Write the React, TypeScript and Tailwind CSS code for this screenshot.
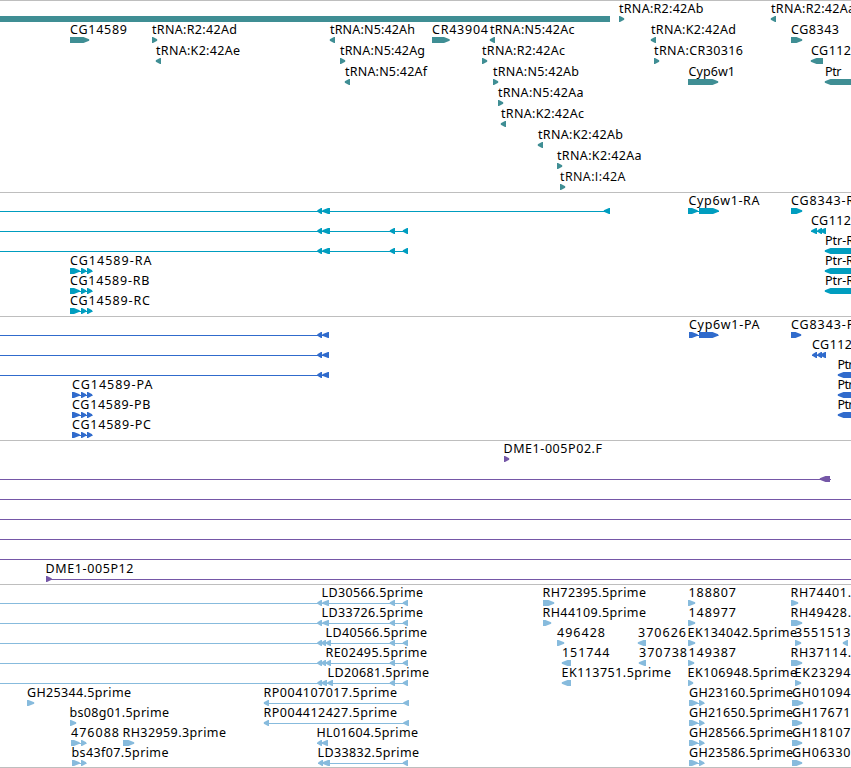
type Span = [number, number];

interface Feature {
  row: number;
  dir?: 'left' | 'right';
  exons?: Span[];
  line?: Span;
  label?: string;
  // left and right edges of the label
  text?: Span;
}

interface TrackData {
  name: string;
  color: string;
  height: number;
  pitch: number;
  features: Feature[];
}

const WIDTH = 851;
const HEAD = 6;

function right(row: number, label: string, text: Span, ...exons: Span[]): Feature {
  return { row, dir: 'right', label, text, exons };
}

function left(row: number, label: string, text: Span, ...exons: Span[]): Feature {
  return { row, dir: 'left', label, text, exons };
}

const genes: Feature[] = [
  { row: 0, line: [0, 610] },
  right(0, 'tRNA:R2:42Ab', [619, 703.5], [619, 624.5]),
  left(0, 'tRNA:R2:42Aa', [771, 855], [770.5, 776]),
  right(1, 'CG14589', [70, 127], [70, 89.5]),
  right(1, 'tRNA:R2:42Ad', [152, 237], [152, 157.5]),
  left(1, 'tRNA:N5:42Ah', [330, 415], [329.5, 335]),
  right(1, 'CR43904', [432, 488], [432, 450]),
  left(1, 'tRNA:N5:42Ac', [490, 574.5], [489.5, 495]),
  left(1, 'tRNA:K2:42Ad', [651, 736], [650.5, 656]),
  right(1, 'CG8343', [791, 839], [791, 802.5]),
  left(2, 'tRNA:K2:42Ae', [156, 240], [155.5, 161]),
  right(2, 'tRNA:N5:42Ag', [340, 425], [340, 345.5]),
  right(2, 'tRNA:R2:42Ac', [482, 565], [482, 487.5]),
  right(2, 'tRNA:CR30316', [654, 743], [654, 659.5]),
  left(2, 'CG112', [811, 851], [810.5, 823]),
  left(3, 'tRNA:N5:42Af', [345, 427], [344.5, 350]),
  right(3, 'tRNA:N5:42Ab', [493, 579], [493, 498.5]),
  right(3, 'Cyp6w1', [688.5, 735], [688, 718.5]),
  left(3, 'Ptr', [825, 841.5], [824.5, 870]),
  right(4, 'tRNA:N5:42Aa', [498, 583.5], [498, 503.5]),
  left(5, 'tRNA:K2:42Ac', [501, 584], [500.5, 506]),
  left(6, 'tRNA:K2:42Ab', [538, 623], [537.5, 543]),
  right(7, 'tRNA:K2:42Aa', [557, 641.5], [557, 562.5]),
  right(8, 'tRNA:I:42A', [560, 625.5], [560, 565.5]),
];

const transcripts: Feature[] = [
  { row: 0, dir: 'left', line: [0, 610], exons: [[317, 322], [322, 330], [603.5, 610]] },
  { row: 1, dir: 'left', line: [0, 408], exons: [[317, 322], [322, 330], [389.5, 395], [402.5, 408]] },
  { row: 2, dir: 'left', line: [0, 408], exons: [[317, 322], [322, 330], [389.5, 395], [402.5, 408]] },
  right(0, 'Cyp6w1-RA', [688.5, 759.5], [688, 698], [699, 719]),
  right(0, 'CG8343-RA', [791, 863], [791, 802.5]),
  left(1, 'CG112', [811, 851], [811, 817], [817, 822], [820, 826]),
  left(2, 'Ptr-RA', [825, 862], [824.5, 870]),
  left(3, 'Ptr-RB', [825, 862], [824.5, 870]),
  left(4, 'Ptr-RC', [825, 862], [824.5, 870]),
  right(3, 'CG14589-RA', [70, 151.5], [70, 80], [81, 86.5], [87, 92.5]),
  right(4, 'CG14589-RB', [70, 149.5], [70, 80], [81, 86.5], [87, 92.5]),
  right(5, 'CG14589-RC', [70, 150], [70, 80], [81, 86.5], [87, 92.5]),
];

const proteins: Feature[] = [
  { row: 0, dir: 'left', line: [0, 329], exons: [[317, 322], [322, 329]] },
  { row: 1, dir: 'left', line: [0, 329], exons: [[317, 322], [322, 329]] },
  { row: 2, dir: 'left', line: [0, 329], exons: [[317, 322], [322, 329]] },
  right(0, 'Cyp6w1-PA', [689, 759.5], [689, 698], [699, 718.5]),
  right(0, 'CG8343-PA', [791, 862.5], [791, 801.5]),
  left(1, 'CG112', [812, 852], [812, 817], [817, 822], [820, 826]),
  left(2, 'Ptr', [837.5, 853.5], [837.5, 870]),
  left(3, 'Ptr', [837.5, 853.5], [837.5, 870]),
  left(4, 'Ptr', [837.5, 853.5], [837.5, 870]),
  right(3, 'CG14589-PA', [72, 152.5], [72, 80], [81, 86.5], [87, 92.5]),
  right(4, 'CG14589-PB', [72, 150.5], [72, 80], [81, 86.5], [87, 92.5]),
  right(5, 'CG14589-PC', [72, 151], [72, 80], [81, 86.5], [87, 92.5]),
];

const bacs: Feature[] = [
  right(0, 'DME1-005P02.F', [503.5, 602], [504, 509.5]),
  { row: 1, dir: 'left', line: [0, 831], exons: [[819.5, 830]] },
  { row: 2, line: [0, WIDTH] },
  { row: 3, line: [0, WIDTH] },
  { row: 4, line: [0, WIDTH] },
  { row: 5, line: [0, WIDTH] },
  { ...right(6, 'DME1-005P12', [45.5, 133.5], [46, 52]), line: [46, WIDTH] },
];

const ests: Feature[] = [
  { ...left(0, 'LD30566.5prime', [321.5, 423], [317, 322], [322, 329], [389.5, 395], [402.5, 408]), line: [0, 408] },
  { ...left(1, 'LD33726.5prime', [321.5, 423], [317, 322], [322, 329], [389.5, 395], [402.5, 408]), line: [0, 408] },
  { ...left(2, 'LD40566.5prime', [325.5, 427], [317, 322], [321, 326], [325.5, 331], [389.5, 395], [402.5, 408]), line: [0, 408] },
  { ...left(3, 'RE02495.5prime', [325.5, 427], [317, 322], [321, 326], [325.5, 331], [389.5, 395], [402.5, 408]), line: [0, 408] },
  { ...left(4, 'LD20681.5prime', [327.5, 429], [317, 322], [321, 327], [327, 333], [389.5, 395], [402.5, 408]), line: [0, 408] },
  { ...left(5, 'RP004107017.5prime', [263.5, 397], [263.5, 269], [403, 409]), line: [264, 409] },
  { ...left(6, 'RP004412427.5prime', [263.5, 397], [263.5, 269], [403, 409]), line: [264, 409] },
  left(7, 'HL01604.5prime', [316.5, 418], [317, 322], [321.5, 328]),
  { ...left(8, 'LD33832.5prime', [317.5, 419], [318, 323], [322, 330], [402.5, 408]), line: [318, 408] },

  right(5, 'GH25344.5prime', [27, 131], [27, 34.5]),
  right(6, 'bs08g01.5prime', [69.5, 169], [70, 76.5]),
  right(7, '476088', [71, 119], [71, 80], [81, 86.5]),
  right(7, 'RH32959.3prime', [122.5, 226], [123, 134.5]),
  right(8, 'bs43f07.5prime', [71.5, 168.5], [72, 80], [81, 86.5]),

  right(0, 'RH72395.5prime', [542.5, 646], [543, 554.5]),
  right(1, 'RH44109.5prime', [542.5, 646], [543, 551.5]),
  right(2, '496428', [557, 605], [557, 564.5]),
  left(3, '151744', [562, 609.5], [561.5, 571]),
  left(4, 'EK113751.5prime', [561.5, 671], [561.5, 571]),
  left(2, '370626', [638, 686], [637.5, 646]),
  left(3, '370738', [639, 687], [638.5, 646]),

  right(0, '188807', [688.5, 736], [688, 695.5]),
  right(1, '148977', [688.5, 736], [688, 695.5]),
  right(2, 'EK134042.5prime', [687.5, 797], [688, 695.5]),
  right(3, '149387', [688.5, 736], [688, 694.5]),
  right(4, 'EK106948.5prime', [687.5, 797], [688, 693.5]),
  right(5, 'GH23160.5prime', [689, 793], [689, 698], [699, 704.5]),
  right(6, 'GH21650.5prime', [689, 793], [689, 698], [699, 704.5]),
  right(7, 'GH28566.5prime', [689, 793], [689, 698], [699, 704.5]),
  right(8, 'GH23586.5prime', [689, 793], [689, 698], [699, 704.5]),

  right(0, 'RH74401.', [790.5, 851], [791, 798.5]),
  right(1, 'RH49428.', [790.5, 851], [791, 802.5]),
  right(2, '3551513', [795, 850.5], [795, 801.5]),
  { row: 2, dir: 'left', exons: [[842.5, 848]] },
  right(3, 'RH37114.', [790.5, 851], [791, 802.5]),
  right(4, 'EK23294', [794.5, 850.5], [795, 801.5]),
  right(5, 'GH01094', [792, 850.5], [792, 803.5]),
  right(6, 'GH17671', [792, 850.5], [792, 802.5]),
  right(7, 'GH18107', [792, 850.5], [792, 802.5]),
  right(8, 'GH06330', [792, 850.5], [792, 802.5]),
];

const tracks: TrackData[] = [
  { name: 'genes', color: '#3f8e94', height: 192, pitch: 21, features: genes },
  { name: 'transcripts', color: '#009dbf', height: 124, pitch: 20, features: transcripts },
  { name: 'proteins', color: '#306bcc', height: 124, pitch: 20, features: proteins },
  { name: 'bacs', color: '#7557a7', height: 144, pitch: 20, features: bacs },
  { name: 'ests', color: '#87bbdd', height: 183, pitch: 20, features: ests },
];

// the tip is one pixel blunt so that short exons stay readable
function exonPoints([a, b]: Span, top: number, dir?: 'left' | 'right') {
  const head = Math.min(HEAD, b - a - 1);
  const mid = top + 3;
  const bottom = top + 6;
  if (dir === 'left') {
    const tip = a + 0.3;
    return `${b},${top} ${a + head},${top} ${tip},${mid - 0.7} ${tip},${mid + 0.7} ${a + head},${bottom} ${b},${bottom}`;
  }
  const tip = b - 0.3;
  return `${a},${top} ${b - head},${top} ${tip},${mid - 0.7} ${tip},${mid + 0.7} ${b - head},${bottom} ${a},${bottom}`;
}

function FeatureGlyph({ feature, pitch }: { feature: Feature; pitch: number }) {
  const { row, dir, exons = [], line, label, text } = feature;
  const top = row * pitch + 16;
  // connectors are hairlines, an undirected gene is a full-height bar
  const solid = pitch === 21;
  const span: Span | undefined =
    line ?? (exons.length > 1 ? [exons[0][0], exons[exons.length - 1][1]] : undefined);

  return (
    <g>
      {span && (
        <rect
          x={span[0]}
          y={solid ? top : top + 3}
          width={span[1] - span[0]}
          height={solid ? 6 : 1}
        />
      )}
      {exons.map((exon) => (
        <polygon key={exon[0]} points={exonPoints(exon, top, dir)} />
      ))}
      {label && text && (
        <text
          x={text[0]}
          y={top - 3}
          textLength={text[1] - text[0]}
          className={
            label.includes(':I:')
              ? "fill-black font-['Open_Sans',sans-serif]"
              : 'fill-black'
          }
        >
          {label}
        </text>
      )}
    </g>
  );
}

function Track({ track }: { track: TrackData }) {
  return (
    <section>
      <div className="h-px bg-[#bebebe]" />
      <svg
        width={WIDTH}
        height={track.height - 1}
        viewBox={`0 1 ${WIDTH} ${track.height - 1}`}
        fill={track.color}
        className="block font-['Noto_Sans',sans-serif] text-[12.5px]"
      >
        {track.features.map((feature, i) => (
          <FeatureGlyph key={i} feature={feature} pitch={track.pitch} />
        ))}
      </svg>
    </section>
  );
}

export default function App() {
  return (
    <main className="flex h-[768px] w-[851px] flex-col overflow-hidden bg-white">
      {tracks.map((track) => (
        <Track key={track.name} track={track} />
      ))}
      <div className="h-px bg-[#bebebe]" />
    </main>
  );
}
